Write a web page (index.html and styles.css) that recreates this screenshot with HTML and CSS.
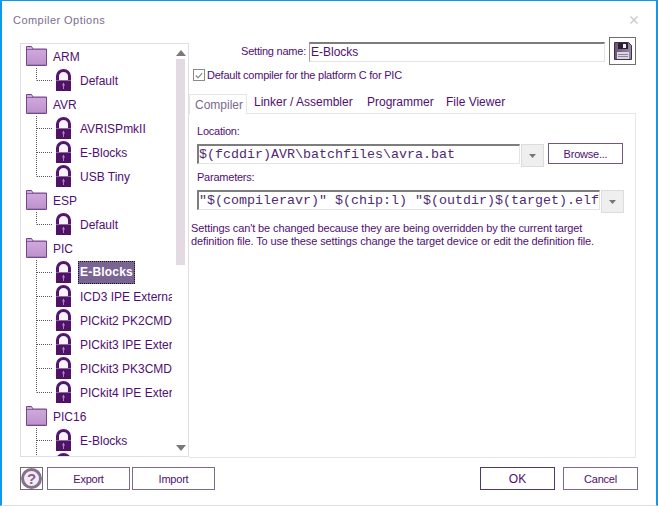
FILE: index.html
```html
<!DOCTYPE html>
<html lang="en">
<head>
<meta charset="utf-8">
<title>Compiler Options</title>
<link rel="stylesheet" href="styles.css">
</head>
<body>
<svg class="defs" width="0" height="0" aria-hidden="true">
  <defs>
    <linearGradient id="fg" x1="0" y1="0" x2="0" y2="1">
      <stop offset="0" stop-color="#d2aede"/><stop offset="1" stop-color="#bd90cc"/>
    </linearGradient>
    <linearGradient id="sg" x1="0" y1="0" x2="1" y2="0">
      <stop offset="0" stop-color="#6a5578"/><stop offset="1" stop-color="#9a88a8"/>
    </linearGradient>
    <symbol id="folder" viewBox="0 0 21 20">
      <path d="M.5 19.500V.5h5l1.500 2.500h13.500v16.500z" fill="url(#fg)" stroke="#75468a"/>
      <path d="M1 3.500h19" stroke="#8d5fa0"/>
      <path d="M1.500 18.500h18" stroke="#a87cb9"/>
    </symbol>
    <symbol id="lock" viewBox="0 0 15 22">
      <path d="M1.500 12V7A6 5.500 0 0 1 13.500 7v5" fill="#f6f2f8" stroke="#55156e" stroke-width="3"/>
      <rect x="0" y="11" width="15" height="11" fill="#4f1266"/>
      <rect x="0" y="11" width="15" height="1" fill="#8d6a9f"/>
      <path d="M7.500 14v6M6 16h3" stroke="#a98bb8"/>
    </symbol>
    <symbol id="tee" viewBox="0 0 18 24">
      <path d="M.5 0v24M1 12.500h15" stroke="#555" stroke-dasharray="1 1" fill="none"/>
    </symbol>
    <symbol id="ell" viewBox="0 0 18 24">
      <path d="M.5 0v12.500M1 12.500h15" stroke="#555" stroke-dasharray="1 1" fill="none"/>
    </symbol>
  </defs>
</svg>
<main class="window">
  <header class="titlebar">
    <span class="title">Compiler Options</span>
    <svg class="close" width="8" height="8" viewBox="0 0 8 8"><path d="M.5.5l7 7M7.500.5l-7 7" stroke="#c9c9c9" stroke-width="1.400"/></svg>
  </header>
  <div class="body">
    <nav class="tree">
      <ul class="rows">
        <li class="row group"><svg class="ico-f"><use href="#folder"/></svg><span>ARM</span></li>
        <li class="row leaf"><svg class="conn"><use href="#ell"/></svg><svg class="ico-l"><use href="#lock"/></svg><span>Default</span></li>
        <li class="row group"><svg class="ico-f"><use href="#folder"/></svg><span>AVR</span></li>
        <li class="row leaf"><svg class="conn"><use href="#tee"/></svg><svg class="ico-l"><use href="#lock"/></svg><span>AVRISPmkII</span></li>
        <li class="row leaf"><svg class="conn"><use href="#tee"/></svg><svg class="ico-l"><use href="#lock"/></svg><span>E-Blocks</span></li>
        <li class="row leaf"><svg class="conn"><use href="#ell"/></svg><svg class="ico-l"><use href="#lock"/></svg><span>USB Tiny</span></li>
        <li class="row group"><svg class="ico-f"><use href="#folder"/></svg><span>ESP</span></li>
        <li class="row leaf"><svg class="conn"><use href="#ell"/></svg><svg class="ico-l"><use href="#lock"/></svg><span>Default</span></li>
        <li class="row group"><svg class="ico-f"><use href="#folder"/></svg><span>PIC</span></li>
        <li class="row leaf"><svg class="conn"><use href="#tee"/></svg><svg class="ico-l"><use href="#lock"/></svg><span class="sel">E-Blocks</span></li>
        <li class="row leaf"><svg class="conn"><use href="#tee"/></svg><svg class="ico-l"><use href="#lock"/></svg><span>ICD3 IPE External</span></li>
        <li class="row leaf"><svg class="conn"><use href="#tee"/></svg><svg class="ico-l"><use href="#lock"/></svg><span>PICkit2 PK2CMD Prog</span></li>
        <li class="row leaf"><svg class="conn"><use href="#tee"/></svg><svg class="ico-l"><use href="#lock"/></svg><span>PICkit3 IPE External</span></li>
        <li class="row leaf"><svg class="conn"><use href="#tee"/></svg><svg class="ico-l"><use href="#lock"/></svg><span>PICkit3 PK3CMD Prog</span></li>
        <li class="row leaf"><svg class="conn"><use href="#ell"/></svg><svg class="ico-l"><use href="#lock"/></svg><span>PICkit4 IPE External</span></li>
        <li class="row group"><svg class="ico-f"><use href="#folder"/></svg><span>PIC16</span></li>
        <li class="row leaf"><svg class="conn"><use href="#tee"/></svg><svg class="ico-l"><use href="#lock"/></svg><span>E-Blocks</span></li>
        <li class="row leaf"><svg class="conn"><use href="#tee"/></svg><svg class="ico-l"><use href="#lock"/></svg></li>
      </ul>
      <div class="scrollbar">
        <svg class="arrow" width="10" height="6" viewBox="0 0 10 6"><path d="M5 0l5 6H0z" fill="#7a7a7a"/></svg>
        <div class="track"><div class="thumb"></div></div>
        <svg class="arrow" width="10" height="6" viewBox="0 0 10 6"><path d="M0 0h10L5 6z" fill="#7a7a7a"/></svg>
      </div>
    </nav>
    <section class="settings">
      <div class="name-row">
        <label class="name-label">Setting name:</label>
        <div class="field name-field">E-Blocks</div>
        <button class="save" aria-label="Save">
          <svg width="18" height="18" viewBox="0 0 18 18">
            <path d="M.5.5h14l3 3v14H.5z" fill="url(#sg)" stroke="#3e2f4c"/>
            <rect x="4" y="1" width="10" height="6" fill="#2a2030"/>
            <rect x="9" y="2" width="3" height="4" fill="#f2eef4"/>
            <rect x="3" y="10" width="12" height="7" fill="#dcd6e0"/>
            <path d="M4 12.500h10M4 14.500h10" stroke="#8f8498"/>
          </svg>
        </button>
      </div>
      <label class="check-row">
        <span class="check"><svg width="11" height="11" viewBox="0 0 11 11"><path d="M2 5.500l2.500 2.500 4.500-5" fill="none" stroke="#7d7d7d" stroke-width="1.200"/></svg></span>
        Default compiler for the platform C for PIC
      </label>
      <div class="tabs">
        <span class="tab active">Compiler</span>
        <span class="tab t-linker">Linker / Assembler</span>
        <span class="tab t-prog">Programmer</span>
        <span class="tab t-view">File Viewer</span>
      </div>
      <div class="panel">
        <div class="lbl">Location:</div>
        <div class="combo-row">
          <div class="field mono loc">$(fcddir)AVR\batchfiles\avra.bat</div>
          <button class="drop" aria-label="Open"><svg width="7" height="4" viewBox="0 0 7 4"><path d="M0 0h7L3.500 4z" fill="#777"/></svg></button>
          <button class="btn browse">Browse...</button>
        </div>
        <div class="lbl lbl2">Parameters:</div>
        <div class="combo-row">
          <div class="field mono par">"$(compileravr)" $(chip:l) "$(outdir)$(target).elf</div>
          <button class="drop" aria-label="Open"><svg width="7" height="4" viewBox="0 0 7 4"><path d="M0 0h7L3.500 4z" fill="#777"/></svg></button>
        </div>
        <p class="note">Settings can't be changed because they are being overridden by the current target definition file. To use these settings change the target device or edit the definition file.</p>
      </div>
    </section>
  </div>
  <footer class="footer">
    <button class="help" aria-label="Help">
      <span class="help-disc">?</span>
    </button>
    <button class="btn wide">Export</button>
    <button class="btn wide">Import</button>
    <span class="spacer"></span>
    <button class="btn act ok">OK</button>
    <button class="btn act">Cancel</button>
  </footer>
</main>
</body>
</html>
```
FILE: styles.css
```css
* { box-sizing: border-box; }
html, body { margin: 0; padding: 0; height: 100%; background: #fff; }
body { font-family: "Liberation Sans", Arial, sans-serif; font-size: 12px; color: #4f0f72; overflow: hidden; }
.defs { display: block; height: 0; }
button { font: inherit; color: inherit; background: #fff; padding: 0; cursor: default; }
.window { width: 658px; height: 506px; border-style: solid; border-color: #0a9bf0; border-width: 1px 2px 0 2px; display: flex; flex-direction: column; border-bottom: 1px solid #dcdcdc; }
.titlebar { height: 42px; flex: none; display: flex; align-items: flex-start; justify-content: space-between; padding: 12px 18px 0 11px; }
.title { font-size: 11px; letter-spacing: .45px; color: #7e6c90; line-height: 14px; }
.close { margin-top: 3px; }
.body { display: flex; flex: none; height: 414px; padding-left: 18px; }
.tree { width: 169px; height: 414px; flex: none; border: 1px solid #e2dde2; display: flex; overflow: hidden; }
.rows { list-style: none; margin: 0; padding: 0; width: 151px; flex: none; overflow: hidden; height: 412px; }
.row { height: 24px; display: flex; align-items: center; white-space: nowrap; overflow: hidden; }
.row span { padding-top: 1px; }
.group { padding-left: 5px; }
.ico-f { width: 21px; height: 20px; flex: none; margin-right: 6px; }
.leaf { padding-left: 15px; }
.conn { width: 18px; height: 24px; flex: none; margin-right: 2px; }
.ico-l { width: 15px; height: 22px; flex: none; margin-right: 9px; }
.row .sel { background: #7a6491; color: #fff; font-weight: bold; letter-spacing: .2px; outline: 1px dotted #1c1030; outline-offset: -1px; height: 23px; line-height: 22px; padding: 0 2px; margin-left: -2px; }
.scrollbar { width: 16px; margin-left: 3px; padding-right: 5px; display: flex; flex-direction: column; align-items: center; flex: none; }
.arrow { flex: none; margin: 6px 0 3px; }
.arrow:last-child { margin: 3px 0 5px; }
.track { flex: 1; width: 9px; background: #fff; }
.thumb { height: 206px; background: #e3dae3; }
.settings { flex: none; width: 447px; display: flex; flex-direction: column; }
.name-row { height: 28px; margin-top: -6px; display: flex; align-items: flex-start; }
.name-label, .check-row, .lbl, .btn { font-size: 11px; letter-spacing: -.23px; }
.name-label { width: 117px; text-align: right; padding-top: 7px; line-height: 14px; }
.field { border: 1px solid #e4e4e4; border-top: 2px solid #7d7d7d; border-left: 2px solid #7d7d7d; background: #fff; white-space: nowrap; overflow: hidden; }
.name-field { width: 296px; height: 20px; margin: 5px 0 0 3px; line-height: 17px; padding-left: 1px; border-left-width: 1px; border-left-color: #a0a0a0; }
.save { width: 27px; height: 28px; margin-left: 4px; border: 1px solid #6e6e6e; display: flex; align-items: center; justify-content: center; }
.check-row { display: flex; align-items: center; height: 14px; margin: 3px 0 0 4px; gap: 2px; line-height: 14px; }
.check { width: 12px; height: 12px; border: 1px solid #8a8a8a; display: flex; align-items: center; justify-content: center; flex: none; }
.tabs { display: flex; height: 20px; margin: 11px 0 0 0; align-items: flex-end; font-size: 12px; }
.tab { display: block; height: 20px; line-height: 19px; white-space: nowrap; }
.active { width: 58px; border: 1px solid #e6e6e6; border-bottom: 0; padding-left: 5px; color: #7a6a8e; line-height: 20px; background: #fff; position: relative; top: 1px; }
.t-linker { margin-left: 7px; width: 113px; }
.t-prog { width: 79px; }
.panel { width: 447px; height: 345px; border: 1px solid #e6e6e6; border-left: 0; padding: 10px 0 0 8px; flex: none; }
.lbl { height: 14px; line-height: 14px; }
.lbl2 { margin-top: 3px; }
.combo-row { display: flex; align-items: flex-start; margin-top: 6px; }
.mono { font-family: "Liberation Mono", "Courier New", monospace; font-size: 13.330px; color: #4f2c72; line-height: 17px; height: 20px; }
.loc { width: 323px; }
.par { width: 403px; }
.drop { width: 23px; height: 23px; background: #efefef; border: 1px solid #dcdcdc; margin-left: 1px; display: flex; align-items: center; justify-content: center; }
.btn { border: 1px solid #7e6a8c; background: #fff; text-align: center; height: 23px; }
.browse { width: 75px; height: 21px; margin: -1px 0 0 4px; border-color: #6e5a80; }
.note { margin: 9px 0 0 -6px; font-size: 11px; letter-spacing: -.11px; line-height: 13px; width: 405px; }
.footer { display: flex; align-items: center; height: 23px; margin-top: 10px; padding-left: 18px; flex: none; }
.help { width: 23px; height: 23px; border: 1px solid #6e6e6e; display: flex; align-items: center; justify-content: center; margin-right: 4px; }
.help-disc { width: 21px; height: 21px; border-radius: 50%; background: #f1ecf3; border: 3px solid #86708f; color: #86608f; font-weight: bold; font-size: 15px; line-height: 15px; text-align: center; }
.wide { width: 83px; margin-right: 2px; }
.spacer { flex: 1; }
.act { width: 75px; margin-right: 18px; }
.ok { border-color: #4e3a68; margin-right: 8px; font-size: 12px; letter-spacing: 0; }
```
